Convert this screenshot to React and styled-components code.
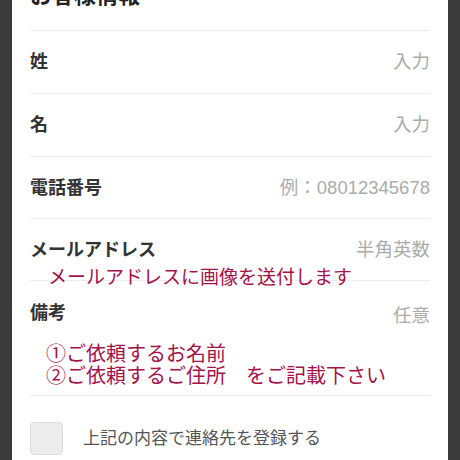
import React from "react";
import styled, { createGlobalStyle } from "styled-components";

const Global = createGlobalStyle`
  html, body { margin: 0; padding: 0; background: #3a3a3a; }
  body { overflow: hidden; font-family: "Liberation Sans", "Noto Sans CJK JP", sans-serif; }
`;

const Page = styled.div`
  width: 460px;
  height: 460px;
  overflow: hidden;
  background: #3a3a3a;
  display: flex;
  justify-content: center;
`;

const Panel = styled.div`
  width: 436px;
  background: #fff;
  padding: 0 18px;
  box-sizing: border-box;
`;

const Header = styled.div`
  height: 31px;
  display: flex;
  align-items: flex-end;
  padding-bottom: 23px;
  box-sizing: border-box;
  border-bottom: 1px solid #ececec;
`;

const Heading = styled.h2`
  margin: 0;
  font-size: 22px;
  line-height: 22px;
  font-weight: 700;
  color: #222;
`;

const Row = styled.div`
  position: relative;
  height: ${(p) => p.$h}px;
  display: flex;
  align-items: ${(p) => (p.$top ? "flex-start" : "center")};
  justify-content: space-between;
  padding-top: ${(p) => (p.$top ? 20 : 0)}px;
  box-sizing: border-box;
  border-bottom: 1px solid #ececec;
`;

const Label = styled.span`
  font-size: 18px;
  font-weight: 600;
  color: #333;
  line-height: 24px;
`;

const Placeholder = styled.span`
  font-size: 18.5px;
  color: #ababab;
  line-height: 24px;
  margin-top: ${(p) => p.$shift || 0}px;
`;

const Note = styled.div`
  position: absolute;
  left: ${(p) => p.$left}px;
  top: ${(p) => p.$top}px;
  font-size: ${(p) => p.$size}px;
  line-height: 22px;
  color: #a3134a;
  white-space: pre;
  z-index: 1;
`;

const CheckRow = styled.div`
  padding-top: 26px;
  display: flex;
  align-items: center;
  gap: 20px;
`;

const Box = styled.span`
  width: 33px;
  height: 33px;
  box-sizing: border-box;
  border: 1px solid #dcdcdc;
  border-radius: 4px;
  background: #ececec;
  flex: none;
`;

const CheckText = styled.span`
  font-size: 17px;
  color: #555;
  line-height: 24px;
`;

const SubText = styled.div`
  margin: 6px 0 0 53px;
  font-size: 15px;
  color: #999;
`;

export default function App() {
  return (
    <>
      <Global />
      <Page>
        <Panel>
          <Header>
            <Heading>お客様情報</Heading>
          </Header>
          <Row $h={63}>
            <Label>姓</Label>
            <Placeholder>入力</Placeholder>
          </Row>
          <Row $h={63}>
            <Label>名</Label>
            <Placeholder>入力</Placeholder>
          </Row>
          <Row $h={62}>
            <Label>電話番号</Label>
            <Placeholder>例：08012345678</Placeholder>
          </Row>
          <Row $h={62}>
            <Label>メールアドレス</Label>
            <Placeholder>半角英数</Placeholder>
            <Note $left={18} $size={19} $top={48}>メールアドレスに画像を送付します</Note>
          </Row>
          <Row $h={115} $top>
            <Label>備考</Label>
            <Placeholder $shift={3}>任意</Placeholder>
            <Note $left={16} $size={20} $top={62}>{"①ご依頼するお名前\n②ご依頼するご住所　をご記載下さい"}</Note>
          </Row>
          <CheckRow>
            <Box />
            <CheckText>上記の内容で連絡先を登録する</CheckText>
          </CheckRow>
          <SubText>次回からお客様情報の入力が不要になります</SubText>
        </Panel>
      </Page>
    </>
  );
}
